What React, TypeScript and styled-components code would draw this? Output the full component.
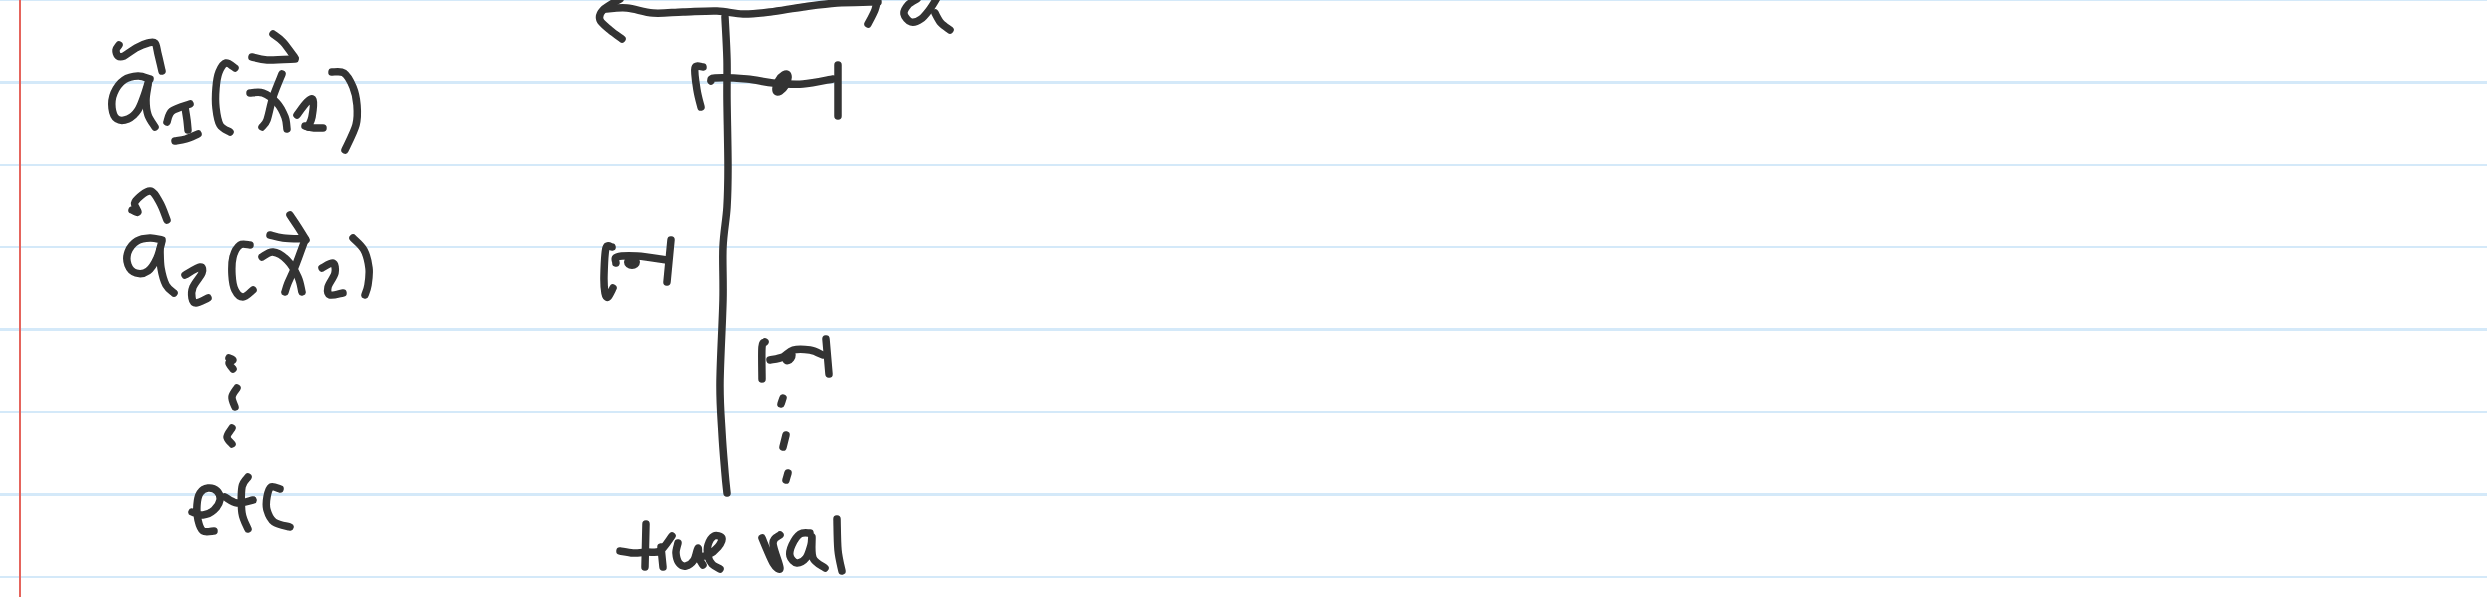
import styled, { createGlobalStyle } from 'styled-components'

const GlobalStyle = createGlobalStyle`
  html, body {
    margin: 0;
    padding: 0;
    background: #ffffff;
    overflow: hidden;
  }
`

const RULE = '#d4e9f9'
const MARGIN = '#e5645c'

// ruled sheet: margin line on top of the blue rules
const NotePage = styled.main`
  width: 2487px;
  height: 597px;
  background-color: #ffffff;
  background-image:
    linear-gradient(to right, transparent 18.8px, ${MARGIN} 18.8px, ${MARGIN} 21.2px, transparent 21.2px),
    repeating-linear-gradient(
      to bottom,
      ${RULE} 0,
      ${RULE} 1.25px,
      transparent 1.25px,
      transparent 81.15px,
      ${RULE} 81.15px,
      ${RULE} 82.4px
    );
`

const InkLayer = styled.svg`
  display: block;
  width: 2487px;
  height: 597px;
`

const Stroke = styled.path`
  fill: none;
  stroke: #333333;
  stroke-width: 7.5px;
  stroke-linecap: round;
  stroke-linejoin: round;
`

const Blob = styled.ellipse`
  fill: #333333;
`

type Pt = [number, number]

// catmull-rom through the pen points, so the ink stays round
const smooth = (pts: Pt[]) => {
  let d = `M${pts[0][0]} ${pts[0][1]}`
  for (let i = 0; i < pts.length - 1; i++) {
    const p0 = pts[i - 1] ?? pts[i]
    const p1 = pts[i]
    const p2 = pts[i + 1]
    const p3 = pts[i + 2] ?? p2
    const c1x = p1[0] + (p2[0] - p0[0]) / 6
    const c1y = p1[1] + (p2[1] - p0[1]) / 6
    const c2x = p2[0] - (p3[0] - p1[0]) / 6
    const c2y = p2[1] - (p3[1] - p1[1]) / 6
    d += ` C${c1x.toFixed(1)} ${c1y.toFixed(1)} ${c2x.toFixed(1)} ${c2y.toFixed(1)} ${p2[0]} ${p2[1]}`
  }
  return d
}

const formulaStrokes: Pt[][] = [
  // a1 hat
  [[119, 45], [116, 50], [118, 56], [124, 56], [136, 48], [148, 43], [155, 43], [158, 54], [162, 71]],
  // a1
  [[150, 79], [138, 76], [124, 80], [114, 93], [112, 108], [117, 119], [128, 119], [138, 110], [145, 93], [149, 80]],
  [[148, 85], [146, 100], [148, 115], [155, 127]],
  // sub 1
  [[167, 122], [172, 111], [190, 104]],
  [[185, 107], [187, 120], [188, 130]],
  [[175, 141], [186, 139], [198, 134]],
  // (
  [[235, 68], [226, 63], [219, 72], [216, 88], [216, 108], [220, 125], [230, 132]],
  // arrow over x1
  [[252, 57], [267, 60], [295, 59]],
  [[273, 34], [283, 42], [295, 58]],
  // x1
  [[250, 93], [263, 93], [277, 103], [285, 117], [287, 129]],
  [[282, 74], [273, 97], [267, 120], [262, 127]],
  // sub 1
  [[297, 115], [307, 102], [313, 100], [312, 117], [308, 127]],
  [[305, 126], [314, 128], [323, 128]],
  // )
  [[332, 72], [344, 73], [353, 87], [357, 105], [356, 125], [345, 150]],

  // a2 hat
  [[132, 210], [138, 212], [135, 202], [150, 191], [160, 203], [167, 220]],
  // a2
  [[162, 240], [150, 238], [137, 241], [128, 252], [128, 265], [136, 273], [148, 271], [157, 258], [162, 241]],
  [[160, 250], [161, 268], [166, 285], [174, 293]],
  // sub 2
  [[185, 275], [200, 267], [202, 273], [193, 287], [192, 298], [196, 303], [208, 298]],
  // (
  [[250, 245], [240, 245], [233, 257], [232, 275], [235, 290], [243, 297], [253, 290]],
  // arrow over x2
  [[270, 235], [283, 238], [305, 239]],
  [[290, 215], [298, 227], [306, 240]],
  // x2
  [[262, 257], [273, 252], [287, 260], [298, 277], [302, 292]],
  [[305, 240], [295, 267], [288, 283], [285, 292]],
  // sub 2
  [[322, 268], [333, 263], [335, 273], [328, 287], [330, 295], [343, 293]],
  // )
  [[353, 238], [364, 250], [369, 268], [368, 285], [365, 295]],

  // left dots
  [[229, 358], [233, 360], [229, 363], [233, 369]],
  [[237, 388], [232, 397], [235, 407]],
  [[232, 428], [227, 437], [232, 444]],

  // etc
  [[192, 512], [203, 515], [214, 510], [220, 500], [217, 491], [208, 488], [200, 493], [197, 505], [198, 520], [203, 531], [214, 531]],
  [[225, 497], [237, 503], [253, 500]],
  [[248, 477], [242, 487], [242, 513], [248, 529]],
  [[280, 489], [271, 487], [267, 497], [267, 510], [274, 522], [290, 527]],
]

const axisStrokes: Pt[][] = [
  // horizontal axis with arrows
  [[620, -1], [603, 10], [600, 20], [610, 30], [622, 39]],
  [[605, 9], [627, 8], [653, 13], [683, 12], [717, 11], [743, 14], [770, 12], [803, 7], [837, 3], [870, 2], [878, 2]],
  [[868, 24], [875, 10], [878, -3]],
  // a
  [[917, -1], [908, 5], [904, 14], [911, 22], [921, 19], [930, 9], [937, -2]],
  [[935, 13], [941, 23], [950, 30]],
  // vertical axis
  [[725, 17], [727, 60], [727, 100], [728, 167], [727, 207], [723, 247], [723, 300], [720, 383], [722, 433], [725, 473], [727, 493]],

  // interval 1
  [[703, 67], [695, 68], [697, 90], [701, 107]],
  [[711, 81], [715, 78], [747, 79], [773, 83], [803, 84], [833, 79]],
  [[838, 65], [838, 116]],
  // interval 2
  [[612, 247], [606, 248], [604, 275], [605, 293], [608, 297], [613, 288]],
  [[616, 263], [617, 257], [637, 256], [667, 260]],
  [[671, 240], [667, 282]],
  // interval 3
  [[765, 342], [762, 347], [762, 379]],
  [[770, 360], [783, 357], [793, 350], [810, 350], [823, 355]],
  [[826, 339], [829, 374]],
  // right dots
  [[783, 398], [781, 404]],
  [[786, 435], [783, 447]],
  [[788, 473], [786, 480]],

  // true
  [[620, 551], [633, 553], [647, 552], [660, 551], [672, 536]],
  [[646, 524], [645, 567]],
  [[661, 547], [663, 567]],
  [[678, 543], [676, 553], [679, 563], [686, 566], [694, 560], [698, 548], [699, 558], [703, 565]],
  [[698, 557], [708, 555], [718, 547], [722, 538], [714, 536], [708, 545], [708, 556], [712, 564], [720, 569]],
  // val
  [[762, 538], [773, 563], [780, 568], [773, 543], [780, 535]],
  [[810, 533], [800, 534], [792, 545], [790, 556], [797, 563], [806, 558], [811, 545], [812, 537], [813, 558], [825, 568]],
  [[837, 519], [838, 550], [842, 571]],
]

export default function App() {
  return (
    <>
      <GlobalStyle />
      <NotePage>
        <InkLayer viewBox="0 0 2487 597" aria-label="handwritten confidence intervals: a1(x1), a2(x2), etc, true val">
          {formulaStrokes.map((pts, i) => (
            <Stroke key={i} d={smooth(pts)} />
          ))}
          {axisStrokes.map((pts, i) => (
            <Stroke key={i} d={smooth(pts)} />
          ))}
          <Blob cx={782} cy={83} rx={8} ry={14} transform="rotate(30 782 83)" />
          <Blob cx={632} cy={262} rx={8} ry={7} />
          <Blob cx={789} cy={357} rx={6} ry={8} transform="rotate(35 789 357)" />
        </InkLayer>
      </NotePage>
    </>
  )
}
